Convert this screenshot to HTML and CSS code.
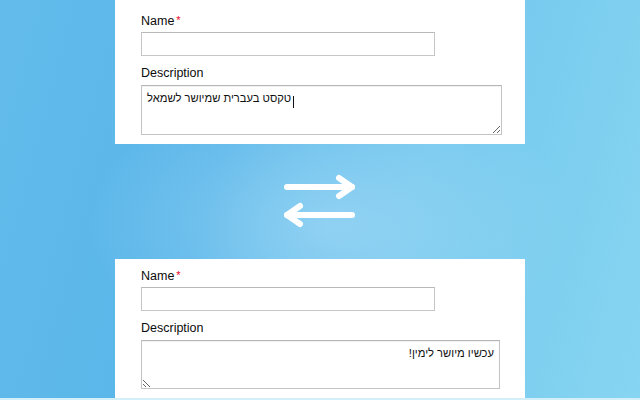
FILE: index.html
```html
<!DOCTYPE html>
<html lang="en">
<head>
    <meta charset="UTF-8">
    <meta name="viewport" content="width=device-width, initial-scale=1.0">
    <title>RTL Textarea</title>
    <link rel="stylesheet" href="styles.css">
</head>
<body>

    <!-- Before: Hebrew text stuck on the left -->
    <div class="card card-top">
        <div class="field">
            <label for="name-before">Name<span class="required">*</span></label>
            <input type="text" class="text-input" id="name-before">
        </div>
        <div class="field">
            <label for="desc-before">Description</label>
            <div class="textarea-wrap">
                <textarea class="text-area" id="desc-before" readonly>טקסט בעברית שמיושר לשמאל</textarea>
                <span class="caret"></span>
            </div>
        </div>
    </div>

    <div class="swap">
        <svg width="72" height="56" viewBox="0 0 72 56">
            <g fill="none" stroke="#fff" stroke-width="6" stroke-linecap="round" stroke-linejoin="round">
                <path d="M3 13 H68"/>
                <path d="M55 4 L68 13 L55 22"/>
                <path d="M3 41 H68"/>
                <path d="M16 32 L3 41 L16 50"/>
            </g>
        </svg>
    </div>

    <!-- After: aligned right -->
    <div class="card card-bottom">
        <div class="field">
            <label for="name-after">Name<span class="required">*</span></label>
            <input type="text" class="text-input" id="name-after">
        </div>
        <div class="field">
            <label for="desc-after">Description</label>
            <textarea class="text-area" id="desc-after" dir="rtl" readonly>עכשיו מיושר לימין!</textarea>
        </div>
    </div>

    <div class="edge"></div>

</body>
</html>
```

FILE: styles.css
```css
  body {
      font-family: "Liberation Sans", Arial, sans-serif;
      margin: 0;
      height: 400px;
      overflow: hidden;
      color: #111;
      background:
          radial-gradient(ellipse 240px 150px at 330px 225px, rgba(175, 222, 248, 0.55), rgba(175, 222, 248, 0) 100%),
          linear-gradient(105deg, #62bbeb 0%, #5ab6e9 35%, #74c8ee 62%, #86d5f1 100%);
  }
  .card {
      background-color: #fff;
      width: 410px;
      margin: 0 auto;
      box-sizing: border-box;
      padding: 0 26px;
  }
  .card-top {
      height: 144px;
      padding-top: 14px;
  }
  .card-bottom {
      height: 139px;
      padding-top: 10px;
  }
  .field {
      margin-bottom: 10px;
  }
  .field label {
      display: block;
      font-size: 12.5px;
      line-height: 14px;
      margin-bottom: 4px;
      color: #0c0c0c;
  }
  .required {
      color: #e8001c;
      font-size: 11px;
      line-height: 0;
      vertical-align: 1px;
      margin-left: 2px;
  }
  .text-input {
      display: block;
      width: 294px;
      height: 24px;
      box-sizing: border-box;
      border: 1px solid #c6c6c6;
      border-top-color: #b9b9b9;
      margin: 0;
      padding: 2px 5px;
      background: #fff;
  }
  .textarea-wrap {
      position: relative;
  }
  .text-area {
      display: block;
      width: 361px;
      height: 50px;
      box-sizing: border-box;
      margin: 5px 0 0;
      padding: 5px 5px;
      border: 1px solid #c4c4c4;
      border-top-color: #b6b6b6;
      box-shadow: inset 0 1px 1px rgba(0, 0, 0, 0.06);
      font-family: "Liberation Sans", Arial, sans-serif;
      font-size: 11.2px;
      line-height: 14px;
      color: #111;
      background: #fff;
      outline: none;
  }
  .card-bottom .text-area {
      height: 49px;
      width: 359px;
  }
  .caret {
      position: absolute;
      left: 152px;
      top: 11px;
      width: 1px;
      height: 12px;
      background-color: #111;
  }
  .swap {
      height: 115px;
      display: flex;
      align-items: center;
      justify-content: center;
  }
  .swap svg {
      display: block;
      margin-left: -1px;
  }
  .edge {
      height: 2px;
      background-color: #d2effa;
  }
```
